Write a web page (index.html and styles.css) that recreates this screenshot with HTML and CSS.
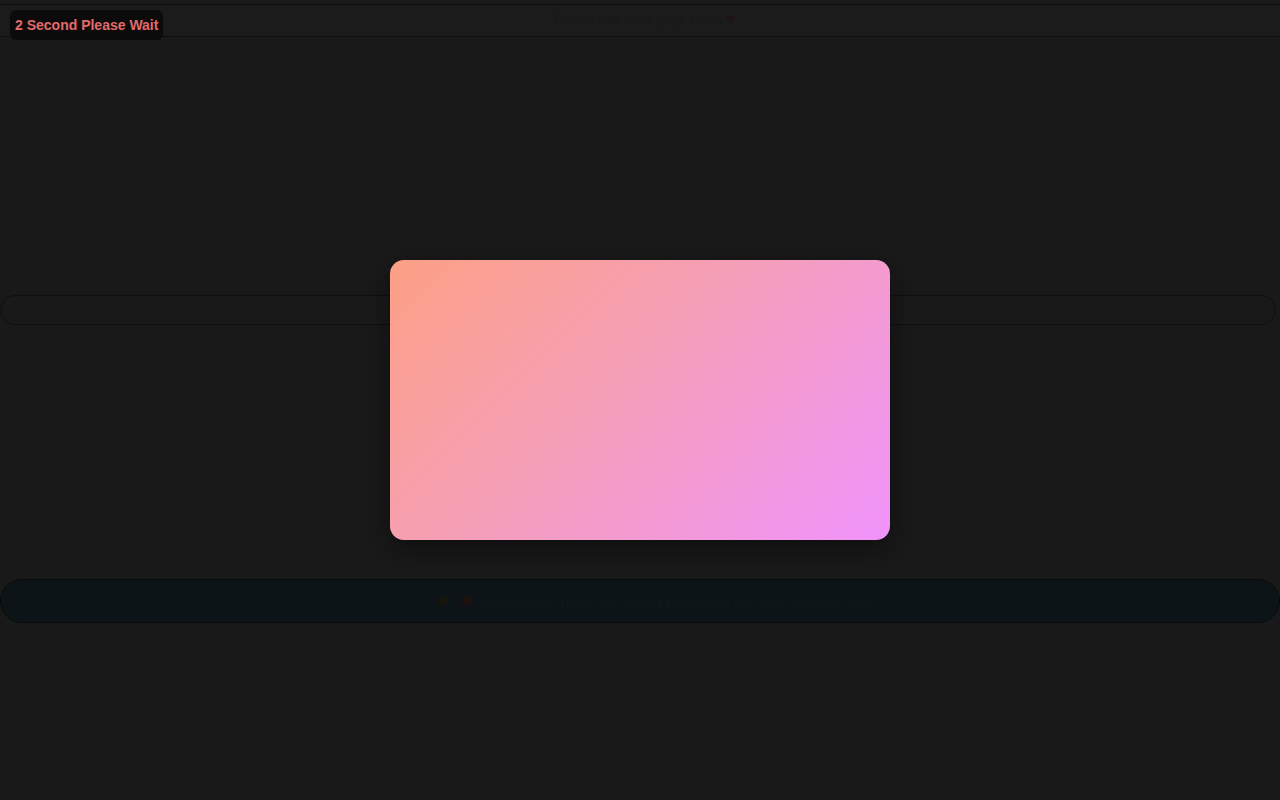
FILE: index.html
```html
<!DOCTYPE html>
<html lang="en">
<head>
<meta charset="utf-8">
<title>Please Wait</title>
<link rel="stylesheet" href="styles.css">
</head>
<body>
  <div class="page">
    <header class="topbar">
      <span class="topbar-title">Please wait while page loads <span class="heart">❤</span></span>
    </header>
    <div class="spacer-a"></div>
    <div class="strip"></div>
    <div class="spacer-b"></div>
    <div class="pill">
      <span class="pill-icons"><span class="dot dot-a"></span><span class="dot dot-b"></span></span>
      <span class="pill-text">Download links are being prepared for you, please wait</span>
    </div>
  </div>

  <div class="overlay">
    <div class="modal"></div>
  </div>

  <div class="badge">2 Second Please Wait</div>
</body>
</html>
```
FILE: styles.css
```css
* { box-sizing: border-box; }

html, body {
  margin: 0;
  padding: 0;
  height: 100%;
}

body {
  background: #3f3f3f;
  font-family: "Liberation Sans", Arial, sans-serif;
  overflow: hidden;
}

.page {
  padding-top: 4px;
}

.topbar {
  height: 33px;
  background: #444444;
  border-top: 1px solid #242424;
  border-bottom: 1px solid #242424;
  display: flex;
  align-items: center;
  justify-content: center;
}

.topbar-title {
  font-size: 13px;
  color: #3e3e3e;
  padding-left: 10px;
  padding-bottom: 3px;
}

.heart {
  color: #4a3636;
}

.spacer-a {
  height: 258px;
}

.strip {
  height: 30px;
  margin-right: 4px;
  border: 1px solid #262626;
  border-radius: 15px;
  background: #404040;
}

.spacer-b {
  height: 254px;
}

.pill {
  height: 44px;
  border: 1px solid #121c20;
  border-radius: 22px;
  background: #1f333b;
  display: flex;
  align-items: center;
  justify-content: center;
  gap: 10px;
  padding-left: 30px;
}

.pill-icons {
  display: flex;
  gap: 14px;
}

.dot {
  width: 10px;
  height: 10px;
  border-radius: 50%;
}

.dot-a { background: #3a3424; }
.dot-b { background: #4a2a22; }

.pill-text {
  font-size: 15px;
  font-weight: bold;
  color: #22383f;
}

.overlay {
  position: fixed;
  inset: 0;
  background: rgba(0, 0, 0, 0.6);
  display: flex;
  align-items: center;
  justify-content: center;
}

.modal {
  width: 500px;
  height: 280px;
  border-radius: 14px;
  background: linear-gradient(135deg, #fda085 0%, #f59fb8 45%, #f093fb 100%);
  box-shadow: 0 10px 30px rgba(0, 0, 0, 0.45);
}

.badge {
  position: fixed;
  top: 10px;
  left: 10px;
  height: 30px;
  padding: 0 5px;
  display: flex;
  align-items: center;
  background: #0b0b0b;
  border-radius: 6px;
  color: #e46a6a;
  font-size: 14px;
  font-weight: bold;
}
```
